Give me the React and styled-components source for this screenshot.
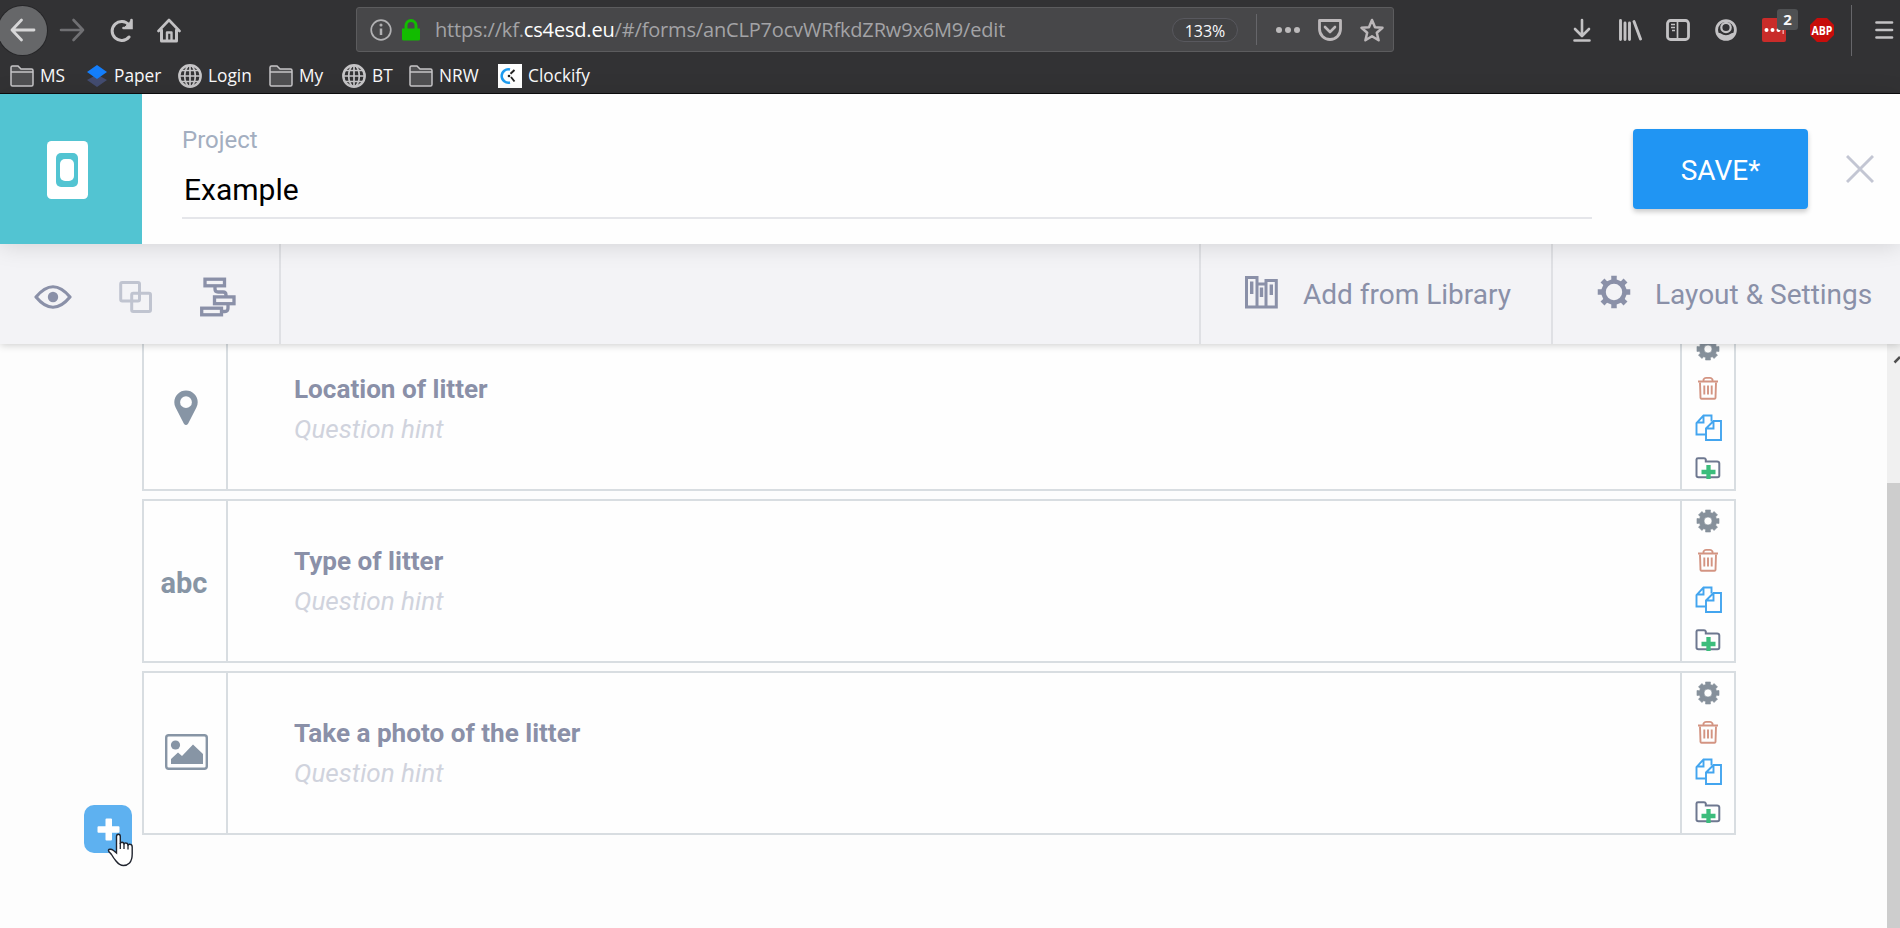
import React from "react";
import styled, { createGlobalStyle } from "styled-components";

const Global = createGlobalStyle`
  * { box-sizing: border-box; }
  body { margin: 0; overflow: hidden; font-family: Roboto, sans-serif; }
  svg { display: block; flex: none; }
`;

const Window = styled.div`
  width: 1900px;
  height: 928px;
  display: flex;
  flex-direction: column;
  overflow: hidden;
  background: #fdfdfd;
`;

/* ---------- browser frame ---------- */
const Chrome = styled.header`
  height: 94px;
  flex: none;
  background: #323234;
  border-bottom: 1px solid #0c0c0d;
  font-family: "Open Sans", "Noto Sans", sans-serif;
  color: #f9f9fa;
`;
const NavBar = styled.div`
  height: 60px;
  display: flex;
  align-items: center;
`;
const NavButtons = styled.div`
  width: 356px;
  display: flex;
  align-items: center;
  gap: 24px;
`;
const BackButton = styled.div`
  width: 49px;
  height: 49px;
  margin: 0 -12px 0 -2px;
  border-radius: 50%;
  background: #666769;
  display: grid;
  place-items: center;
  box-shadow: 0 0 0 1px #262628;
`;
const UrlBar = styled.div`
  width: 1038px;
  height: 45px;
  margin-top: -1px;
  padding-left: 13px;
  display: flex;
  align-items: center;
  background: #474749;
  border: 1px solid #5c5c5e;
  border-radius: 3px;
`;
const Url = styled.div`
  flex: 1;
  margin-left: 15px;
  font-size: 20px;
  letter-spacing: -0.17px;
  color: #a3a3a6;
  white-space: nowrap;
  b { font-weight: 400; color: #fff; }
`;
const Zoom = styled.div`
  width: 66px;
  height: 24px;
  border: 1px solid #58585e;
  border-radius: 12px;
  background: #434345;
  font-size: 16px;
  line-height: 24px;
  text-align: center;
`;
const Rule = styled.div`
  width: 1px;
  height: ${(p) => p.$h}px;
  background: #66666a;
  margin: ${(p) => p.$m};
`;
const UrlActions = styled.div`
  display: flex;
  align-items: center;
  gap: 18px;
  padding-right: 9px;
`;
const Extensions = styled.div`
  flex: 1;
  display: flex;
  align-items: center;
  padding-left: 176px;
  gap: 24px;
`;
const PassBox = styled.div`
  position: relative;
  width: 24px;
  height: 24px;
  border-radius: 2px;
  background: #c92c2a;
`;
const Count = styled.span`
  position: absolute;
  left: 15px;
  top: -9px;
  width: 21px;
  height: 21px;
  border-radius: 3px;
  background: #4f5153;
  font-size: 15px;
  font-weight: 700;
  line-height: 21px;
  text-align: center;
`;
const Bookmarks = styled.div`
  height: 32px;
  padding-left: 10px;
  display: flex;
  align-items: center;
`;
const Bookmark = styled.div`
  width: ${(p) => p.$w}px;
  display: flex;
  align-items: center;
  gap: 6px;
  font-size: 17.3px;
  line-height: 30px;
  white-space: nowrap;
`;

/* ---------- project header ---------- */
const Header = styled.div`
  height: 150px;
  flex: none;
  display: flex;
  position: relative;
  z-index: 3;
  background: #fefefe;
  box-shadow: 0 2px 22px rgba(0, 0, 0, 0.13);
`;
const Brand = styled.div`
  width: 142px;
  background: #52c4d2;
  padding: 47px 0 0 47px;
`;
const Field = styled.label`
  width: 1410px;
  height: 125px;
  margin-left: 40px;
  padding-top: 31px;
  display: flex;
  flex-direction: column;
  border-bottom: 2px solid #e5e6ea;
`;
const FieldName = styled.span`
  font-size: 24px;
  line-height: 30px;
  color: #a3aec0;
`;
const FieldValue = styled.span`
  margin: 16px 0 0 2px;
  font-size: 30px;
  line-height: 38px;
  color: #000;
`;
const Save = styled.button`
  width: 175px;
  height: 80px;
  margin: 35px 38px 0 41px;
  border: 0;
  border-radius: 4px;
  background: #2095f3;
  box-shadow: 0 3px 5px rgba(0, 0, 0, 0.2);
  color: #fff;
  font: 400 28px/81px Roboto, sans-serif;
  padding: 1px 0 0;
`;
const Close = styled.div`
  padding-top: 61px;
`;

/* ---------- toolbar ---------- */
const Toolbar = styled.div`
  height: 100px;
  flex: none;
  display: flex;
  position: relative;
  z-index: 2;
  background: #f3f3f6;
  box-shadow: 0 1px 8px rgba(0, 0, 0, 0.2);
`;
const Tools = styled.div`
  width: 281px;
  padding: 6px 0 0 34px;
  display: flex;
  align-items: center;
  border-right: 2px solid #dfe0e4;
`;
const Spacer = styled.div`
  flex: 1;
`;
const ToolLink = styled.div`
  width: ${(p) => p.$w}px;
  padding-left: ${(p) => p.$pl}px;
  display: flex;
  align-items: center;
  gap: ${(p) => p.$gap}px;
  border-left: 2px solid #dfe0e4;
  font-size: 28px;
  color: #8a90a8;
  white-space: nowrap;
  svg { margin-top: -4px; }
`;

/* ---------- form builder ---------- */
const Canvas = styled.main`
  flex: 1;
  min-height: 0;
  display: flex;
`;
const Questions = styled.div`
  width: 1594px;
  margin: -17px 151px 0 142px;
  display: flex;
  flex-direction: column;
  gap: 8px;
  position: relative;
`;
const Card = styled.section`
  height: 164px;
  flex: none;
  display: flex;
  border: 2px solid #d8dde1;
  background: #fefefe;
`;
const TypeCell = styled.div`
  width: 84px;
  border-right: 2px solid #d8dde1;
  display: grid;
  place-items: center;
  color: #8795a5;
  font-size: 29px;
  font-weight: 700;
`;
const Body = styled.div`
  flex: 1;
  padding: 40px 0 0 66px;
`;
const Title = styled.div`
  font-size: 26.1px;
  line-height: 40px;
  font-weight: 700;
  color: #8a90a8;
`;
const Hint = styled.div`
  font-size: 26.1px;
  line-height: 40px;
  font-style: italic;
  color: #d0d3dd;
`;
const Actions = styled.div`
  width: 54px;
  border-left: 2px solid #d8dde1;
  padding-top: 8px;
  display: flex;
  flex-direction: column;
  align-items: center;
`;
const Action = styled.div`
  height: ${(p) => p.$h}px;
`;
const AddButton = styled.div`
  position: absolute;
  left: -58px;
  top: 478px;
  width: 48px;
  height: 48px;
  border-radius: 10px;
  background: #5eb1f0;
  display: grid;
  place-items: center;
`;
const Pointer = styled.div`
  position: absolute;
  left: 23px;
  top: 28px;
`;
const Scrollbar = styled.div`
  width: 13px;
  padding-top: 10px;
  background: #f0f0f0;
  display: flex;
  flex-direction: column;
  justify-content: space-between;
`;
const Thumb = styled.div`
  height: 445px;
  background: #cdcdcd;
`;

const Icon = ({ w, h, children, ...rest }) => (
  <svg width={w} height={h} viewBox={`0 0 ${w} ${h}`} fill="none" {...rest}>{children}</svg>
);
const grey = "#c3c2c4";

const FolderIcon = () => (
  <Icon w={24} h={22}>
    <path d="M1 20V2.5Q1 1 2.5 1H8L11 4H21.5Q23 4 23 5.5V19.5Q23 21 21.5 21H2.5Q1 21 1 19.5Z" fill="#505052" stroke="#c6c5c7" strokeWidth="1.5" />
    <path d="M1 7H23" stroke="#c6c5c7" strokeWidth="1.5" />
  </Icon>
);
const GlobeIcon = () => (
  <Icon w={24} h={24} stroke="#c6c5c7" strokeWidth="1.7">
    <circle cx="12" cy="12" r="10.7" strokeWidth="2.4" />
    <ellipse cx="12" cy="12" rx="5.3" ry="10.5" />
    <path d="M12 1V23M1 12H23M3 6.5H21M3 17.5H21" />
  </Icon>
);
const PaperIcon = () => (
  <Icon w={22} h={24}>
    <path d="M1 16L11 10.5L21 16L11 23Z" fill="#434c70" />
    <path d="M11 1L21 8L11 15L1 8Z" fill="#147efb" />
  </Icon>
);
const ClockifyIcon = () => (
  <Icon w={24} h={24}>
    <rect width="24" height="24" fill="#fff" />
    <path d="M12 5.5A6.7 6.7 0 1 0 12 18.5" stroke="#1e9cf0" strokeWidth="2.5" />
    <path d="M16.500 6L12.5 9.8M13 13L16.5 17.5" stroke="#222" strokeWidth="1.9" />
    <circle cx="11" cy="12" r="1.3" fill="#222" />
  </Icon>
);

/* outline of a toothed wheel; the tooth widths are half angles in radians */
function gearPath(cx, cy, ro, ri, outer, inner) {
  const pts = [];
  for (let i = 0; i < 8; i++) {
    const a = (i * Math.PI) / 4 - Math.PI / 2;
    [[ri, -inner], [ro, -outer], [ro, outer], [ri, inner]].forEach(([r, d]) =>
      pts.push(`${(cx + r * Math.cos(a + d)).toFixed(2)} ${(cy + r * Math.sin(a + d)).toFixed(2)}`));
  }
  return `M${pts.join("L")}Z`;
}
const CogIcon = () => (
  <Icon w={24} h={24}>
    <path fillRule="evenodd" fill="#86909b" stroke="#86909b" strokeWidth=".6" strokeLinejoin="round" d={gearPath(12, 12, 11.3, 8.8, 0.22, 0.27) + "M16 12a4 4 0 1 0-8 0a4 4 0 1 0 8 0Z"} />
  </Icon>
);
const TrashIcon = () => (
  <Icon w={22} h={24} stroke="#d39482">
    <path d="M1 5.5H21" strokeWidth="2" />
    <path d="M6.500 5V3.5Q7.5 1.8 9 1.8H13Q14.5 1.8 15.5 3.5V5" strokeWidth="1.8" />
    <path d="M3 6.5L3.5 22Q3.6 22.8 4.5 22.8H17.5Q18.4 22.8 18.5 22L19 6.5" strokeWidth="1.9" />
    <path d="M7.3 9.5V18.5M11 9.5V18.5M14.7 9.5V18.5" strokeWidth="1.9" />
  </Icon>
);
const CopyIcon = () => (
  <Icon w={27} h={27} stroke="#43a5ef" strokeWidth="1.9">
    <path d="M10.5 20.5H1.5V9L8.5 1.5H16.5V7.5M8.5 2V8.5H2" />
    <path d="M26 7V26H11V14.5L18.5 7ZM18.5 7.5V14.5H11.5" fill="#fefefe" />
  </Icon>
);
const FolderPlusIcon = () => (
  <Icon w={26} h={23}>
    <path d="M1.5 2.5Q1.5 1.2 3 1.2H9Q10.500 1.2 10.8 2.5V4.5H22Q24.3 4.5 24.3 6.5V18.5Q24.3 20.3 22.5 20.3H3.5Q1.5 20.3 1.5 18.5Z" stroke="#6e7890" strokeWidth="2" />
    <path d="M13.500 8V22M6.5 15H20.5" stroke="#3cbd7c" strokeWidth="4.3" />
  </Icon>
);
const PinIcon = () => (
  <Icon w={24} h={36}>
    <path fillRule="evenodd" fill="#8795a5" d="M12 .5A11.7 11.7 0 0 0 .3 12.2Q.3 15 1.6 17.5L9.800 33.5Q12 36.5 14.2 33.5L22.4 17.5Q23.7 15 23.7 12.2A11.7 11.7 0 0 0 12 .5ZM12 6.3A5.9 5.9 0 1 1 12 18.1A5.9 5.9 0 1 1 12 6.3Z" />
  </Icon>
);
const PhotoIcon = () => (
  <Icon w={43} h={36}>
    <rect x="1.2" y="1.2" width="40.6" height="33.6" rx="2.500" stroke="#8795a5" strokeWidth="2.4" />
    <circle cx="10.5" cy="11" r="4.6" fill="#8795a5" />
    <path d="M6 30V25L13 18.500L17 22L28 10.500L38 20V30Z" fill="#8795a5" />
  </Icon>
);

const TypeGlyph = styled.div`
  transform: translate(${(p) => p.$x}px, ${(p) => p.$y}px);
`;

const questions = [
  { title: "Location of litter", glyph: <PinIcon />, x: 1, y: -1 },
  { title: "Type of litter", glyph: "abc", x: -1, y: 1.5 },
  { title: "Take a photo of the litter", glyph: <PhotoIcon />, x: 1, y: -1 },
];

const bookmarks = [
  ["MS", 76, <FolderIcon />],
  ["Paper", 92, <PaperIcon />],
  ["Login", 91, <GlobeIcon />],
  ["My", 73, <FolderIcon />],
  ["BT", 67, <GlobeIcon />],
  ["NRW", 89, <FolderIcon />],
  ["Clockify", 120, <ClockifyIcon />],
];

const Question = ({ title, glyph, x, y }) => (
  <Card>
    <TypeCell><TypeGlyph $x={x} $y={y}>{glyph}</TypeGlyph></TypeCell>
    <Body>
      <Title>{title}</Title>
      <Hint>Question hint</Hint>
    </Body>
    <Actions>
      <Action $h={39}><CogIcon /></Action>
      <Action $h={38}><TrashIcon /></Action>
      <Action $h={43}><CopyIcon /></Action>
      <Action $h={24}><FolderPlusIcon /></Action>
    </Actions>
  </Card>
);

export default function App() {
  return (
    <Window>
      <Global />
      <Chrome>
        <NavBar>
          <NavButtons>
            <BackButton>
              <Icon w={26} h={24} stroke="#d7d7d8" strokeWidth="2.8" strokeLinecap="round" strokeLinejoin="round"><path d="M24 12H2M11.5 2L2 12L11.5 22" /></Icon>
            </BackButton>
            <Icon w={26} h={24} stroke="#707073" strokeWidth="2.6" strokeLinecap="round" strokeLinejoin="round"><path d="M2 12H24M14.5 2L24 12L14.5 22" /></Icon>
            <Icon w={24} h={24} stroke={grey} strokeWidth="3" strokeLinecap="round"><path d="M20 19A9.5 9.5 0 1 1 20 7" /><path d="M22.500 2V10H14.5" strokeWidth="2.6" /><path d="M22 3V9.5H16Z" fill={grey} strokeWidth="1" /></Icon>
            <Icon w={24} h={25} stroke={grey} strokeLinejoin="round" strokeLinecap="round"><path d="M1.5 13L12 2L22.5 13" strokeWidth="2.6" /><path d="M4.5 12V23H19.5V12" strokeWidth="3" /><path d="M10 22V14.5H14.5V22" strokeWidth="2.4" /></Icon>
          </NavButtons>
          <UrlBar>
            <Icon w={22} h={22} stroke="#b1b1b3" strokeWidth="1.7"><circle cx="11" cy="11" r="9.8" /><path d="M11 9.5V16" strokeWidth="2.5" /><circle cx="11" cy="6" r=".7" /></Icon>
            <Icon w={28} h={22}><path d="M10 9.5H28V20Q28 21.5 26.5 21.5H11.5Q10 21.5 10 20Z" fill="#12bc00" /><path d="M14 10V6.5A5 5 0 0 1 24 6.5V10" stroke="#12bc00" strokeWidth="3" /></Icon>
            <Url>https://kf.<b>cs4esd.eu</b>/#/forms/anCLP7ocvWRfkdZRw9x6M9/edit</Url>
            <Zoom>133%</Zoom>
            <Rule $h={31} $m="0 19px 0 18px" />
            <UrlActions>
              <Icon w={24} h={8} fill="#bcbabb"><circle cx="3" cy="4" r="3" fill="#bcbabb" /><circle cx="12" cy="4" r="3" fill="#bcbabb" /><circle cx="21" cy="4" r="3" fill="#bcbabb" /></Icon>
              <Icon w={24} h={22} stroke="#bcb8ba" strokeWidth="2.8" strokeLinecap="round" strokeLinejoin="round"><path d="M1.5 1.5H22.5V10A10.5 10.5 0 0 1 1.5 10Z" /><path d="M7 8L12 13L17 8" strokeWidth="2.6" /></Icon>
              <Icon w={24} h={24} stroke="#bcb8ba" strokeWidth="2.5" strokeLinejoin="round"><path d="M12 2L15 9.2L22.5 9.7L16.8 14.7L18.6 22.3L12 18.3L5.4 22.3L7.2 14.7L1.5 9.7L9 9.2Z" /></Icon>
            </UrlActions>
          </UrlBar>
          <Extensions>
            <Icon w={24} h={24} stroke={grey} strokeWidth="2.6" strokeLinecap="round" strokeLinejoin="round"><path d="M12 2V17M5 11L12 18L19 11M4.5 22.5H19.5" /></Icon>
            <Icon w={24} h={22} stroke={grey} strokeWidth="2.9" strokeLinecap="round"><path d="M2.5 1.5V20.5M7 4V20.5M11.5 4V20.5M16 2.5L22.5 20" /></Icon>
            <Icon w={24} h={22} stroke={grey}><rect x="1.5" y="1.5" width="21" height="19" rx="3" strokeWidth="2.8" /><path d="M11.5 2V20" strokeWidth="1.7" /><path d="M5 5.5H9M5 8.5H9M6 11.5H9" strokeWidth="1.5" /></Icon>
            <Icon w={24} h={22}><circle cx="12" cy="11" r="9.4" stroke={grey} strokeWidth="2.8" /><circle cx="12" cy="8.5" r="4.7" stroke={grey} strokeWidth="2.2" /><path d="M3 13.500L6.500 14.2Q12 18.5 17.5 14.2L21 13.500Q18 20.5 12 20.5Q6 20.5 3 13.500Z" fill={grey} /></Icon>
            <PassBox>
              <Icon w={24} h={24}><circle cx="4.5" cy="12" r="2" fill="#fff" /><circle cx="10.5" cy="12" r="2" fill="#fff" /><circle cx="16.5" cy="12" r="2" fill="#fff" /><path d="M21.2 9V16" stroke="#f0a5a4" strokeWidth="1.5" /></Icon>
              <Count>2</Count>
            </PassBox>
            <Icon w={24} h={24}><path d="M7 0H17L24 7V17L17 24H7L0 17V7Z" fill="#c70d0b" /><text x="12" y="16.5" fill="#fff" fontSize="12.5" fontWeight="700" fontFamily="Open Sans, sans-serif" textAnchor="middle" textLength="21" lengthAdjust="spacingAndGlyphs">ABP</text></Icon>
            <Rule $h={51} $m="0 -1px 0 -7px" />
            <Icon w={20} h={20} stroke={grey} strokeWidth="2.7" strokeLinecap="round"><path d="M1.500 2.5H17M1.500 10H17M1.500 17.5H17" /></Icon>
          </Extensions>
        </NavBar>
        <Bookmarks>
          {bookmarks.map(([name, w, icon]) => <Bookmark key={name} $w={w}>{icon}{name}</Bookmark>)}
        </Bookmarks>
      </Chrome>
      <Header>
        <Brand>
          <Icon w={41} h={58}>
            <rect width="41" height="58" rx="4.5" fill="#fff" />
            <rect x="9" y="12" width="22" height="34" rx="5" fill="#52c4d2" />
            <rect x="13" y="18" width="14" height="22" rx="5" fill="#fff" />
          </Icon>
        </Brand>
        <Field>
          <FieldName>Project</FieldName>
          <FieldValue>Example</FieldValue>
        </Field>
        <Save>SAVE*</Save>
        <Close><Icon w={28} h={28} stroke="#c3c6d3" strokeWidth="2.9"><path d="M1 1L27 27M27 1L1 27" /></Icon></Close>
      </Header>
      <Toolbar>
        <Tools>
          <Icon w={38} h={24} stroke="#8a90a8"><path d="M2 12Q19-8.500 36 12Q19 32.500 2 12Z" strokeWidth="3.2" strokeLinejoin="round" /><circle cx="19" cy="12" r="5.2" fill="#8a90a8" strokeWidth="0" /></Icon>
          <Icon w={80} h={32} stroke="#c0c4d0" strokeWidth="3"><rect x="48.7" y="1.5" width="18.800" height="18.5" rx="1.5" /><rect x="59.7" y="12.3" width="18.800" height="18.2" rx="1.5" /></Icon>
          <Icon w={84} h={40} stroke="#8a90a8" strokeWidth="3.3">
            <rect x="53" y="2.200" width="19.500" height="6.6" /><rect x="62.500" y="19.900" width="19.500" height="6.8" /><rect x="49.7" y="31.200" width="19.8" height="6.6" />
            <path d="M63 9V12Q63 15 66 15H71Q74 15 74 18V20M76 27V31Q76 34.5 73 34.5H70" />
          </Icon>
        </Tools>
        <Spacer />
        <ToolLink $w={352} $pl={44} $gap={25}>
          <Icon w={33} h={33} stroke="#8a90a8" strokeWidth="3"><path d="M1.5 1.5H12V31H1.5ZM12 8H21V31H12ZM21 4.5H31.3V31H21Z" /><path d="M6.7 5.5V18M16.5 11.500V21M26.300 8.5V19" strokeWidth="3.4" /></Icon>
          Add from Library
        </ToolLink>
        <ToolLink $w={349} $pl={44} $gap={24}>
          <Icon w={34} h={34}><path fillRule="evenodd" fill="#8a90a8" d={gearPath(17, 17, 16.5, 12.8, 0.17, 0.21) + "M25.200 17a8.200 8.200 0 1 0-16.400 0a8.200 8.200 0 1 0 16.400 0Z"} /></Icon>
          Layout &amp; Settings
        </ToolLink>
      </Toolbar>
      <Canvas>
        <Questions>
          {questions.map((q) => <Question key={q.title} {...q} />)}
          <AddButton>
            <Icon w={23} h={23}><path d="M9.5 .5H14Q15 .5 15 1.5V8.3H21.5Q22.5 8.3 22.5 9.3V13.7Q22.5 14.7 21.5 14.7H15V21.5Q15 22.5 14 22.5H9.5Q8.5 22.5 8.5 21.5V14.7H1.5Q.5 14.7 .5 13.7V9.3Q.5 8.3 1.5 8.3H8.5V1.5Q8.5 .5 9.5 .5Z" fill="#fff" /></Icon>
            <Pointer>
              <Icon w={27} h={34}>
                <path d="M9.5 20V3.5Q9.5 1.2 11.5 1.2Q13.3 1.2 13.3 3.5V11Q13.3 9.3 15 9.3Q17 9.3 17 11.5Q17.3 9.7 19 10Q21 10.2 21 12.5Q21.5 11 23 11.3Q25.2 11.5 25.2 14V21Q25.2 27 22.5 30Q20 32.5 16.5 32.5Q12.5 32.5 9 28Q6.5 25 4.5 21.5L1.8 18.5Q.7 16.5 3 16.2Q4.5 16 6.5 17.5Z" fill="#fff" stroke="#20242e" strokeWidth="1.4" />
                <path d="M13.3 10V16M17 11V16M21 12V16.5" stroke="#20242e" strokeWidth="1.3" />
              </Icon>
            </Pointer>
          </AddButton>
        </Questions>
        <Scrollbar>
          <Icon w={13} h={10}><path d="M7.5 8.500L13 3" stroke="#505050" strokeWidth="2.5" /></Icon>
          <Thumb />
        </Scrollbar>
      </Canvas>
    </Window>
  );
}
